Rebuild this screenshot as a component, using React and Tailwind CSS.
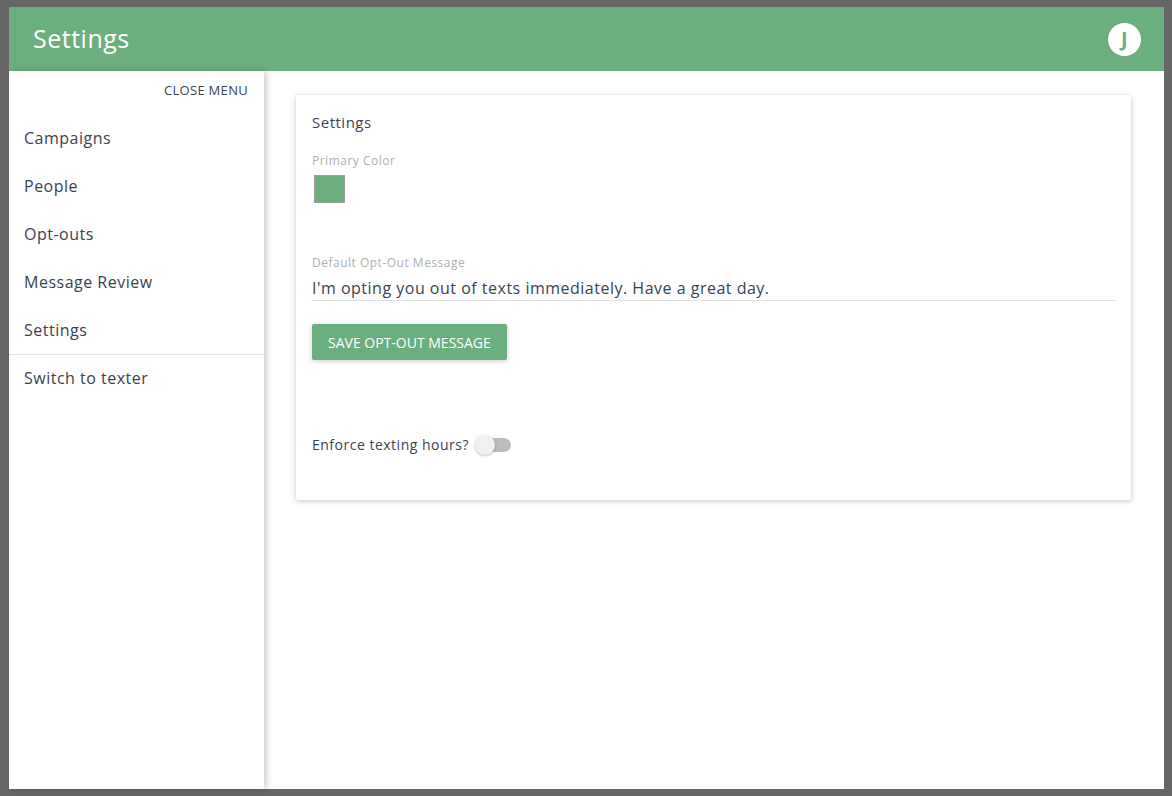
import { useState } from "react";

const navItems = ["Campaigns", "People", "Opt-outs", "Message Review", "Settings"];

export default function App() {
  const [enforce, setEnforce] = useState(false);

  return (
    <div className="h-[796px] w-[1172px] bg-[#666666] pt-[7px] pb-[7px] pl-[9px] pr-[8px] font-['Open_Sans',sans-serif] tracking-[0.5px] text-[#3b4350]">
      <div className="flex h-full flex-col bg-white">
        {/* Header */}
        <header className="flex h-[64px] shrink-0 items-center justify-between bg-[#6caf7e] pl-6 pr-[23px]">
          <h1 className="text-[25px] font-medium text-white">Settings</h1>
          <div className="flex h-[33px] w-[33px] items-center justify-center rounded-full bg-white text-[20px] font-bold text-[#6caf7e]">
            J
          </div>
        </header>

        <div className="flex flex-1">
          {/* Sidebar */}
          <aside className="relative z-10 w-[255px] shrink-0 bg-white shadow-[3px_0_6px_rgba(0,0,0,0.18)]">
            <div className="flex justify-end pr-4 pt-[10px] pb-[12px]">
              <button className="text-[13px] uppercase tracking-[0.3px] text-[#3b4350]">Close menu</button>
            </div>
            <nav className="pt-[1px]">
              {navItems.map((item) => (
                <div key={item} className="flex h-[48px] items-center px-[15px] text-[16px]">
                  {item}
                </div>
              ))}
              <div className="h-px bg-[#e0e0e0]" />
              <div className="flex h-[47px] items-center px-[15px] text-[16px]">Switch to texter</div>
            </nav>
          </aside>

          {/* Main */}
          <main className="flex-1 pl-[32px] pr-[33px] pt-[24px]">
            <section className="rounded-[2px] bg-white px-4 pt-[16px] pb-[45px] shadow-[0_1px_6px_rgba(0,0,0,0.12),0_1px_4px_rgba(0,0,0,0.12)]">
              <h2 className="text-[15px] leading-[22px]">Settings</h2>
              <div className="mt-[19px] text-[12px] text-[#b0b0b0]">Primary Color</div>
              <div className="mt-[5px] ml-[2px] h-[28px] w-[31px] border border-[#9e9e9e] bg-[#6caf7e]" />

              <div className="mt-[51px] text-[12px] text-[#b0b0b0]">Default Opt-Out Message</div>
              <div className="mt-[4px] border-b border-[#e0e0e0] text-[16px] leading-[24px] text-[#3b4350]">
                I'm opting you out of texts immediately. Have a great day.
              </div>
              <button className="mt-[23px] h-[36px] rounded-[2px] bg-[#6caf7e] px-4 text-[14px] font-medium uppercase tracking-[0px] text-white shadow-[0_1px_5px_rgba(0,0,0,0.2)]">
                Save opt-out message
              </button>

              <div className="mt-[74px] flex items-center">
                <span className="text-[14px]">Enforce texting hours?</span>
                <button
                  onClick={() => setEnforce(!enforce)}
                  className="relative ml-[4px] h-[20px] w-[40px]"
                >
                  <span className="absolute top-[3px] left-[10px] h-[14px] w-[28px] rounded-full bg-[#bdbdbd]" />
                  <span
                    className={`absolute top-0 h-[20px] w-[20px] rounded-full shadow-[0_1px_3px_rgba(0,0,0,0.25)] ${
                      enforce ? "left-[20px] bg-[#6caf7e]" : "left-[2px] bg-[#f0f0f0]"
                    }`}
                  />
                </button>
              </div>
            </section>
          </main>
        </div>
      </div>
    </div>
  );
}
